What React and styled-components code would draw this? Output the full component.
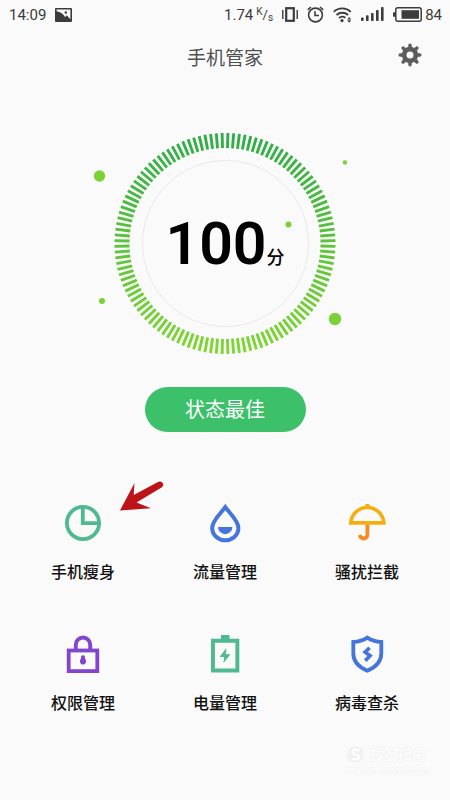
import React from "react";
import styled, { createGlobalStyle } from "styled-components";

const GlobalStyle = createGlobalStyle`
  *, *::before, *::after { box-sizing: border-box; }
  body {
    margin: 0;
    background: #fafafa;
    color: #0c0c0c;
    font-family: Roboto, "Noto Sans CJK SC", sans-serif;
  }
  button { font: inherit; color: inherit; border: 0; padding: 0; background: none; cursor: pointer; }
  svg { display: block; flex: none; }
`;

const Screen = styled.main`
  min-height: 100vh;
  display: flex;
  flex-direction: column;
  background: #fafafa;
`;

const StatusBar = styled.div`
  display: flex;
  align-items: center;
  justify-content: space-between;
  height: 29px;
  padding: 0 8px 0 9px;
  font-size: 15px;
  line-height: 20px;
  color: #3c3c3c;
`;

const StatusGroup = styled.div`
  display: flex;
  align-items: center;
  gap: ${(p) => (p.$tight ? "3px" : "9px")};
`;

const SpeedUnit = styled.span`
  display: flex;
  line-height: 12px;
`;

const UnitPart = styled.span`
  display: flex;
  align-items: ${(p) => p.$align};
  height: 18px;
  font-size: ${(p) => (p.$align === "center" ? "13px" : "10px")};
`;

const Header = styled.header`
  display: grid;
  grid-template-columns: 1fr auto 1fr;
  align-items: center;
  height: 52px;
  padding: 0 28px;
`;

const Title = styled.h1`
  grid-column: 2;
  margin: 0;
  padding-top: 7px;
  font-size: 19px;
  line-height: 28px;
  font-weight: 400;
  color: #505050;
`;

const SettingsButton = styled.button`
  justify-self: end;
  color: #5c5c5c;
`;

const Gauge = styled.section`
  display: grid;
  justify-items: center;
  align-items: center;
  padding-top: 49px;
  & > * { grid-area: 1 / 1; }
`;

const Score = styled.p`
  display: flex;
  align-items: baseline;
  margin: 0;
  color: #000;
`;

const ScoreValue = styled.strong`
  font-size: 59px;
  line-height: 66px;
  font-weight: 600;
`;

const ScoreUnit = styled.span`
  font-size: 18px;
  font-weight: 500;
`;

const StatusButton = styled.button`
  align-self: center;
  min-width: 161px;
  height: 45px;
  margin-top: 29px;
  padding: 0 24px;
  border-radius: 23px;
  background: #3cc069;
  color: #fff;
  font-size: 20px;
  line-height: 28px;
`;

const Tools = styled.nav`
  display: grid;
  grid-template-columns: repeat(3, 1fr);
  row-gap: 48px;
  margin-top: 71px;
  padding: 0 12px;
`;

const ToolButton = styled.button`
  position: relative;
  display: flex;
  flex-direction: column;
  align-items: center;
  gap: 17px;
  font-size: 16px;
  line-height: 26px;
  font-weight: 500;
  color: #111;
`;

const Pointer = styled.svg`
  position: absolute;
  top: -22px;
  left: calc(50% + 35px);
`;

const Watermark = styled.footer`
  display: grid;
  grid-template-columns: auto auto;
  column-gap: 3px;
  align-items: center;
  align-self: flex-end;
  margin: auto 22px 22px 0;
  padding-top: 12px;
  color: #fff;
  text-shadow: 0 0 2px #e4e4e4;
`;

const WatermarkName = styled.span`
  font-size: 14px;
  line-height: 20px;
  font-weight: 500;
`;

const WatermarkSite = styled.span`
  grid-column: 1 / -1;
  font-size: 10px;
  line-height: 14px;
  text-align: center;
`;

const PictureIcon = () => (
  <svg width="17" height="14" viewBox="0 0 17 14" aria-hidden="true">
    <rect width="17" height="14" rx="1" fill="#3c3c3c" />
    <path d="M1.6 1.6h13.8v9.6L11.600 7.200 10.200 9.200C8.500 6.200 5.500 3.700 1.600 3.200z" fill="#fafafa" />
    <circle cx="10.800" cy="4.500" r="1.200" fill="#3c3c3c" />
  </svg>
);

const VibrateIcon = () => (
  <svg width="16" height="15" viewBox="0 0 16 15" fill="none" stroke="#3c3c3c" aria-hidden="true">
    <rect x="4.200" y="1.200" width="7.600" height="12.600" strokeWidth="2.200" />
    <path d="M.8 3v9M15.200 3v9" strokeWidth="1.400" />
  </svg>
);

const AlarmIcon = () => (
  <svg width="17" height="17" viewBox="0 0 17 17" fill="none" stroke="#3c3c3c" strokeWidth="1.600" aria-hidden="true">
    <circle cx="8.500" cy="9" r="6.900" />
    <path d="M8 5.200v4.300h4M.8 3.800 4 1M16.200 3.800 13 1" />
  </svg>
);

const WifiIcon = () => (
  <svg width="19" height="16" viewBox="0 0 19 16" fill="none" stroke="#3c3c3c" strokeWidth="1.800" aria-hidden="true">
    <path d="M.8 4.800a12.400 12.400 0 0 1 17 0M3.500 8a8.600 8.600 0 0 1 11.600 0M6 11a5 5 0 0 1 6.400-.2" />
    <circle cx="9" cy="13.600" r="1.600" fill="#3c3c3c" stroke="none" />
    <path d="M14.200 12.500 16.200 10l2 2.500zM14.200 13.300l2 2.500 2-2.500z" fill="#3c3c3c" stroke="none" />
  </svg>
);

const SignalIcon = () => (
  <svg width="23" height="15" viewBox="0 0 23 15" fill="#3c3c3c" aria-hidden="true">
    <rect x="0" y="10.500" width="2.600" height="3.500" rx=".8" />
    <rect x="5" y="8.300" width="2.600" height="5.700" rx=".8" />
    <rect x="10" y="6" width="2.600" height="8" rx=".8" />
    <rect x="15" y="3" width="2.600" height="11" rx=".8" />
    <rect x="20" y="0" width="2.600" height="14" rx=".8" />
  </svg>
);

const BatteryLevelIcon = () => (
  <svg width="29" height="15" viewBox="0 0 29 15" aria-hidden="true">
    <rect x="2.800" y=".8" width="25.400" height="13.400" rx="2" fill="none" stroke="#3c3c3c" strokeWidth="1.500" />
    <path d="M0 5.300h3v4.400H0z" fill="#3c3c3c" />
    <rect x="8.500" y="3.200" width="17.500" height="8.600" fill="#3c3c3c" />
  </svg>
);

const GearIcon = () => (
  <svg width="24" height="24" viewBox="0 0 24 24" aria-hidden="true">
    <g stroke="currentColor" strokeWidth="3.400" strokeLinecap="round">
      {[0, 45, 90, 135].map((a) => (
        <path key={a} d="M12 2.200v19.600" transform={`rotate(${a} 12 12)`} />
      ))}
    </g>
    <circle cx="12" cy="12" r="8.200" fill="currentColor" />
    <circle cx="12" cy="12" r="3.500" fill="#fafafa" />
  </svg>
);

const TICKS = Array.from({ length: 120 }, (_, i) => {
  const a = ((i + 0.5) * Math.PI) / 60;
  const x = Math.cos(a);
  const y = Math.sin(a);
  return `M${(140 + 95.5 * x).toFixed(2)} ${(113.5 + 95.5 * y).toFixed(2)}L${(140 + 110.5 * x).toFixed(2)} ${(113.5 + 110.5 * y).toFixed(2)}`;
}).join("");

const DialDrawing = () => (
  <svg width="280" height="228" viewBox="0 0 280 228" aria-hidden="true">
    <defs>
      <linearGradient id="dial" gradientUnits="userSpaceOnUse" x1="0" y1="3" x2="0" y2="224">
        <stop offset="0" stopColor="#2fac4a" />
        <stop offset=".5" stopColor="#5cc43a" />
        <stop offset="1" stopColor="#80d633" />
      </linearGradient>
    </defs>
    <path d={TICKS} stroke="url(#dial)" strokeWidth="2.900" />
    <circle cx="140.500" cy="113.500" r="83" fill="none" stroke="#e9e9e9" strokeWidth="1" />
    <g fill="#7bd137">
      <circle cx="14.500" cy="46" r="5.700" />
      <circle cx="260" cy="32.500" r="2.200" />
      <circle cx="203.500" cy="94.500" r="3" />
      <circle cx="17" cy="171" r="3" />
      <circle cx="250" cy="189" r="6.200" />
    </g>
  </svg>
);

const ToolIcon = ({ children }) => (
  <svg width="40" height="40" viewBox="0 0 40 40" fill="none" aria-hidden="true">
    {children}
  </svg>
);

const tools = [
  {
    label: "手机瘦身",
    pointed: true,
    icon: (
      <g stroke="#4fb992" strokeWidth="3.800">
        <circle cx="20" cy="20" r="16.100" />
        <path d="M19.800 4v16.200H36" />
      </g>
    ),
  },
  {
    label: "流量管理",
    icon: (
      <>
        <path d="M20.300 4.200C16.500 9.700 7.200 17.400 7.200 25a13.100 12.300 0 0 0 26.200 0C33.400 17.400 24.100 9.700 20.300 4.200z" stroke="#4474dc" strokeWidth="4" />
        <path d="M13 24h14.400a7.200 7.200 0 0 1-14.400 0z" fill="#4474dc" />
      </>
    ),
  },
  {
    label: "骚扰拦截",
    icon: (
      <>
        <path d="M3.700 19.900C4.500 11 11.500 4.500 20.300 4.500s15.800 6.500 16.600 15.400z" stroke="#f4ae12" strokeWidth="3.600" />
        <path d="M18.300 1h4v3h-4z" fill="#f4ae12" />
        <path d="M20.400 21.600v10.200a3.700 3.700 0 0 1-3.700 3.700c-2.200 0-3.500-1.500-4-3.400" stroke="#f68b22" strokeWidth="3.800" />
      </>
    ),
  },
  {
    label: "权限管理",
    icon: (
      <>
        <path d="M12.800 16v-5.300a7.200 7.200 0 0 1 14.400 0V16" stroke="#8145ce" strokeWidth="3.900" />
        <rect x="5.700" y="16.500" width="28.600" height="20.600" stroke="#8145ce" strokeWidth="3.800" />
        <path d="M20 21.300c-1.900 0-2.400 1.500-1.900 3-.9 1.600-1.500 2.600-1 4.200.4 1.300 1.500 2.100 2.900 2.100s2.500-.8 2.900-2.100c.5-1.600-.1-2.600-1-4.200.5-1.500 0-3-1.900-3z" fill="#8145ce" />
      </>
    ),
  },
  {
    label: "电量管理",
    icon: (
      <g fill="#4fb992">
        <path fillRule="evenodd" d="M16 1h8.500v3.800H34.300v33.700H6V4.800h10zM9.900 8.700v25.900h20.500V8.700z" />
        <path d="m21.400 14-6.900 8.900h4.700l-.8 6.300 7-8.900h-4.700z" />
      </g>
    ),
  },
  {
    label: "病毒查杀",
    icon: (
      <g stroke="#4474dc" strokeWidth="3.800">
        <path d="M20.300 3.600c4.400 2.900 8.700 4.100 14 4.400v11.500c0 7.700-5.400 13.600-14 17.200C11.700 33.100 6.300 27.200 6.300 19.500V8c5.300-.3 9.600-1.500 14-4.400z" />
        <path d="m22.600 13.800-4.500 4.300 5 3.700-4.900 4.800" strokeWidth="3.600" />
      </g>
    ),
  },
];

export default function App() {
  return (
    <>
      <GlobalStyle />
      <Screen>
        <StatusBar>
          <StatusGroup>
            <span>14:09</span>
            <PictureIcon />
          </StatusGroup>
          <StatusGroup>
            <StatusGroup $tight>
              <span>1.74</span>
              <SpeedUnit>
                <UnitPart $align="flex-start">K</UnitPart>
                <UnitPart $align="center">/</UnitPart>
                <UnitPart $align="flex-end">s</UnitPart>
              </SpeedUnit>
            </StatusGroup>
            <VibrateIcon />
            <AlarmIcon />
            <WifiIcon />
            <SignalIcon />
            <StatusGroup $tight>
              <BatteryLevelIcon />
              <span>84</span>
            </StatusGroup>
          </StatusGroup>
        </StatusBar>
        <Header>
          <Title>手机管家</Title>
          <SettingsButton type="button" aria-label="设置">
            <GearIcon />
          </SettingsButton>
        </Header>
        <Gauge>
          <DialDrawing />
          <Score>
            <ScoreValue>100</ScoreValue>
            <ScoreUnit>分</ScoreUnit>
          </Score>
        </Gauge>
        <StatusButton type="button">状态最佳</StatusButton>
        <Tools>
          {tools.map((tool) => (
            <ToolButton type="button" key={tool.label}>
              <ToolIcon>{tool.icon}</ToolIcon>
              {tool.label}
              {tool.pointed && (
                <Pointer width="48" height="32" viewBox="0 0 48 32" aria-hidden="true">
                  <path d="M2 29.500 16.500 2l-.8 12L40.500.8q3-1 4.500 1.600.9 2.600-1.500 4.200L18.500 21.500 33 27.300z" fill="#be1219" />
                </Pointer>
              )}
            </ToolButton>
          ))}
        </Tools>
        <Watermark>
          <svg width="19" height="19" viewBox="0 0 19 19" fill="none" aria-hidden="true">
            <circle cx="9.500" cy="9.500" r="8.500" fill="#f2f2f2" />
            <path d="M13 5.500C10 4 6.500 4.500 6.500 7c0 3 6.500 2 6.500 5 0 2.500-4 3-7 1.300" stroke="#fff" strokeWidth="2" />
          </svg>
          <WatermarkName>搜狗指南</WatermarkName>
          <WatermarkSite>zhinan.sogou.com</WatermarkSite>
        </Watermark>
      </Screen>
    </>
  );
}
